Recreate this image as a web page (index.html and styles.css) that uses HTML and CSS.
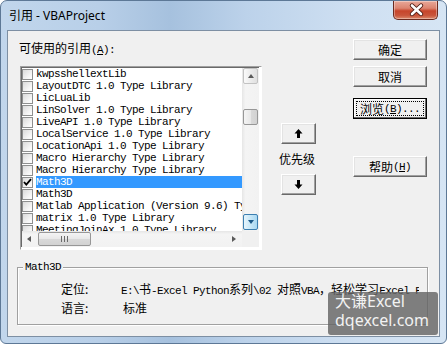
FILE: index.html
```html
<!DOCTYPE html>
<html>
<head>
    <title>引用 - VBAProject</title>
    <link rel="stylesheet" href="styles.css">
</head>
<body>
    <div class="window">
        <div class="titlebar">
            <span class="title">引用 - VBAProject</span>
            <div class="close">
                <svg width="45" height="19" viewBox="0 0 45 19">
                    <path d="M19 5.5 L28 14 M28 5.5 L19 14" stroke="#4a1810" stroke-width="4.4" stroke-linecap="round"/>
                    <path d="M19 5.5 L28 14 M28 5.5 L19 14" stroke="#fff" stroke-width="2.6" stroke-linecap="round"/>
                </svg>
            </div>
        </div>

        <div class="client">
            <div class="top">
                <div class="refs">
                    <div class="label"><span class="zh">可使用的引用</span>(<u>A</u>):</div>
                    <div class="list">
                        <div class="rows">
                            <div class="row"><span class="check"></span><span class="name">kwpsshellextLib</span></div>
                            <div class="row"><span class="check"></span><span class="name">LayoutDTC 1.0 Type Library</span></div>
                            <div class="row"><span class="check"></span><span class="name">LicLuaLib</span></div>
                            <div class="row"><span class="check"></span><span class="name">LinSolver 1.0 Type Library</span></div>
                            <div class="row"><span class="check"></span><span class="name">LiveAPI 1.0 Type Library</span></div>
                            <div class="row"><span class="check"></span><span class="name">LocalService 1.0 Type Library</span></div>
                            <div class="row"><span class="check"></span><span class="name">LocationApi 1.0 Type Library</span></div>
                            <div class="row"><span class="check"></span><span class="name">Macro Hierarchy Type Library</span></div>
                            <div class="row"><span class="check"></span><span class="name">Macro Hierarchy Type Library</span></div>
                            <div class="row sel">
                                <span class="check">
                                    <svg width="9" height="9" viewBox="0 0 9 9"><path d="M1 4 L3.3 6.6 L8 1.2" fill="none" stroke="#000" stroke-width="1.8"/></svg>
                                </span><span class="name">Math3D</span>
                            </div>
                            <div class="row"><span class="check"></span><span class="name">Math3D</span></div>
                            <div class="row"><span class="check"></span><span class="name">Matlab Application (Version 9.6) Type Library</span></div>
                            <div class="row"><span class="check"></span><span class="name">matrix 1.0 Type Library</span></div>
                            <div class="row"><span class="check"></span><span class="name">MeetingJoinAx 1.0 Type Library</span></div>
                        </div>

                        <div class="vscroll">
                            <div class="sbtn"><span class="tri up"></span></div>
                            <div class="vthumb"></div>
                            <div class="sbtn hot"><span class="tri down"></span></div>
                        </div>

                        <div class="hscroll">
                            <div class="hbtn"><span class="tri left"></span></div>
                            <div class="hthumb"><span class="grip"></span></div>
                            <div class="hbtn end"><span class="tri right"></span></div>
                        </div>

                        <div class="corner"></div>
                    </div>
                </div>

                <div class="priority">
                    <div class="btn small">
                        <svg width="9" height="9" viewBox="0 0 9 9"><path d="M4.5 0 L8.5 4.5 L6 4.5 L6 9 L3 9 L3 4.5 L0.5 4.5 Z" fill="#000"/></svg>
                    </div>
                    <div class="prio-label zh">优先级</div>
                    <div class="btn small">
                        <svg width="9" height="9" viewBox="0 0 9 9"><path d="M4.5 9 L8.5 4.5 L6 4.5 L6 0 L3 0 L3 4.5 L0.5 4.5 Z" fill="#000"/></svg>
                    </div>
                </div>

                <div class="actions">
                    <div class="btn zh">确定</div>
                    <div class="btn zh gap-s">取消</div>
                    <div class="btn focus gap-m"><span class="focus-ring"><span class="zh">浏览</span>(<u>B</u>)...</span></div>
                    <div class="btn gap-l"><span class="zh">帮助</span>(<u>H</u>)</div>
                </div>
            </div>

            <div class="info">
                <span class="legend">Math3D</span>
                <div class="info-row">
                    <span class="key zh">定位:</span>
                    <span class="val">E:\<span class="zh">书</span>-Excel Python<span class="zh">系列</span>\02 <span class="zh">对照</span>VBA<span class="zh">，轻松学习</span>Excel Python</span>
                </div>
                <div class="info-row">
                    <span class="key zh">语言:</span>
                    <span class="val zh lang">标准</span>
                </div>
            </div>
        </div>

        <div class="watermark">
            <div>大谦Excel</div>
            <div>dqexcel.com</div>
        </div>
    </div>
</body>
</html>
```

FILE: styles.css
```css
* {
    box-sizing: border-box;
}

body {
    margin: 0;
    background: #fff;
    font-family: 'Liberation Mono', 'Noto Sans CJK SC', monospace;
    font-size: 11px;
    letter-spacing: -0.6px;
    color: #000;
}

.zh {
    font-family: 'Noto Sans CJK SC', sans-serif;
    font-size: 12px;
    letter-spacing: 0;
}

.window {
    position: relative;
    width: 447px;
    height: 344px;
    border: 1px solid #5d7896;
    border-radius: 7px 7px 6px 6px;
    padding: 0 6px 6px;
    display: flex;
    flex-direction: column;
    overflow: hidden;
    background: linear-gradient(to right, #c1d6ec 0%, #b8cfe8 22%, #a6c1de 38%, #bcd2ea 55%, #cfe0f2 80%, #d6e5f4 100%);
}

.titlebar {
    height: 29px;
    display: flex;
    align-items: flex-start;
}

.title {
    font-family: 'Noto Sans', 'Noto Sans CJK SC', sans-serif;
    font-size: 12px;
    letter-spacing: 0;
    line-height: 16px;
    margin: 7px 0 0 2px;
}

.close {
    margin-left: auto;
    margin-right: 2px;
    width: 45px;
    height: 19px;
    border: 1px solid #6b2a1f;
    border-top: none;
    border-radius: 0 0 5px 5px;
    background: linear-gradient(#e8a899 0%, #dc8470 40%, #c7452b 55%, #c9553b 80%, #dc8a6c 100%);
    box-shadow: inset 0 0 0 1px rgba(255, 255, 255, 0.35);
}

.close svg {
    display: block;
    margin: -1px 0 0 -1px;
}

.client {
    flex: 1;
    background: #f0f0f0;
    border: 1px solid #7d8fa3;
}

.top {
    display: flex;
    padding-left: 11px;
    height: 219px;
}

.refs {
    width: 243px;
    padding-top: 11px;
}

.label {
    line-height: 12px;
    height: 12px;
    margin-bottom: 12px;
    white-space: nowrap;
}

.label .zh {
    line-height: 12px;
}

.list {
    margin-left: 1px;
    width: 242px;
    height: 184px;
    border: 1px solid;
    border-color: #a0a0a0 #fff #fff #a0a0a0;
    display: grid;
    grid-template-columns: 221px 17px;
    grid-template-rows: 164px 16px;
    background: #fff;
}

.rows {
    overflow: hidden;
    border-top: 1px solid #696969;
    border-left: 1px solid #696969;
}

.row {
    display: flex;
    height: 12px;
    white-space: nowrap;
}

.check {
    flex: none;
    width: 11px;
    height: 11px;
    margin: 1px 3px 0 0;
    border: 1px solid #8e8f8f;
    background: linear-gradient(135deg, #dadada, #f6f6f6 70%, #fff);
}

.check svg {
    display: block;
}

.name {
    line-height: 12px;
}

.row.sel .name {
    flex: 1;
    background: #3399ff;
    color: #fff;
}

.vscroll {
    grid-row: 1;
    grid-column: 2;
    border-top: 1px solid #696969;
    background: linear-gradient(to right, #e6e6e6, #f4f4f4 20%, #f2f2f2);
    display: flex;
    flex-direction: column;
    padding: 0 1px 1px 1px;
}

.sbtn {
    height: 16px;
    border: 1px solid #c2c2c2;
    border-radius: 2px;
    background: linear-gradient(to right, #fafafa, #ececec 50%, #e0e0e0);
    display: flex;
    align-items: center;
    justify-content: center;
}

.sbtn.hot {
    margin-top: auto;
    border-color: #3c7fb1;
    background: linear-gradient(to right, #e6f5fc, #c8e7f7 50%, #a8d8f2);
}

.vthumb {
    margin-top: 25px;
    height: 16px;
    border: 1px solid #979797;
    border-radius: 2px;
    background: linear-gradient(to right, #f4f4f4, #e8e8e8 50%, #d9d9d9 50%, #d2d2d2);
}

.hscroll {
    grid-row: 2;
    grid-column: 1;
    display: flex;
    border-left: 1px solid #696969;
    background: linear-gradient(#e6e6e6, #f4f4f4 20%, #f2f2f2);
    padding: 1px 0;
}

.hbtn {
    width: 16px;
    display: flex;
    align-items: center;
    justify-content: center;
}

.hbtn.end {
    margin-left: auto;
}

.hthumb {
    width: 53px;
    border: 1px solid #979797;
    border-radius: 2px;
    background: linear-gradient(#f4f4f4, #e8e8e8 50%, #d9d9d9 50%, #d2d2d2);
    display: flex;
    align-items: center;
    justify-content: center;
}

.grip {
    width: 7px;
    height: 6px;
    background: repeating-linear-gradient(to right, #6a6a6a 0 1px, transparent 1px 3px);
}

.corner {
    grid-row: 2;
    grid-column: 2;
    background: #f0f0f0;
}

.tri {
    width: 0;
    height: 0;
    border: 3px solid transparent;
}

.tri.up {
    border-bottom: 4px solid #5a5a5a;
    border-top-width: 0;
    margin-top: -1px;
}

.tri.down {
    border-top: 4px solid #1d5a8a;
    border-bottom-width: 0;
}

.tri.left {
    border-right: 4px solid #5a5a5a;
    border-left-width: 0;
    margin-left: -3px;
}

.tri.right {
    border-left: 4px solid #5a5a5a;
    border-right-width: 0;
}

.btn {
    height: 21px;
    display: flex;
    align-items: center;
    justify-content: center;
    line-height: 12px;
    white-space: nowrap;
    border: 1px solid;
    border-color: #fff #696969 #696969 #fff;
    box-shadow: inset -1px -1px 0 #a0a0a0, inset 1px 1px 0 #e3e3e3;
    background: #f0f0f0;
}

.btn.focus {
    padding: 2px;
    border-color: #000;
    box-shadow: inset -1px -1px 0 #696969, inset 1px 1px 0 #fff;
}

.focus-ring {
    flex: 1;
    align-self: stretch;
    display: flex;
    align-items: center;
    justify-content: center;
    border: 1px dotted #000;
}

.gap-s {
    margin-top: 6px;
}

.gap-m {
    margin-top: 11px;
}

.gap-l {
    margin-top: 37px;
}

.priority {
    margin-left: 19px;
    width: 35px;
    padding-top: 92px;
    display: flex;
    flex-direction: column;
}

.btn.small svg {
    display: block;
}

.prio-label {
    height: 30px;
    line-height: 30px;
    margin-left: -2px;
    white-space: nowrap;
}

.actions {
    margin-left: 37px;
    width: 74px;
    padding-top: 8px;
    display: flex;
    flex-direction: column;
}

.info {
    position: relative;
    margin: 17px 0 0 9px;
    width: 411px;
    height: 58px;
    border: 1px solid #a0a0a0;
    box-shadow: 1px 1px 0 #fff, inset 1px 1px 0 #fff;
    padding: 11px 0 0 43px;
}

.legend {
    position: absolute;
    top: -7px;
    left: 5px;
    padding: 0 2px;
    line-height: 12px;
    background: #f0f0f0;
}

.info-row {
    display: flex;
    line-height: 19px;
    height: 19px;
    white-space: nowrap;
}

.key {
    flex: none;
    width: 60px;
    line-height: 19px;
}

.val {
    overflow: hidden;
    width: 298px;
}

.val .zh {
    line-height: 19px;
}

.lang {
    margin-left: 2px;
}

.watermark {
    position: absolute;
    left: 327px;
    top: 291px;
    width: 110px;
    height: 43px;
    border-radius: 3px;
    padding: 0 0 0 7px;
    background: rgba(100, 100, 100, 0.82);
    color: #f2f2f2;
    font-family: 'Noto Sans', 'Noto Sans CJK SC', sans-serif;
    font-size: 16px;
    letter-spacing: 0;
    line-height: 19px;
}
```
